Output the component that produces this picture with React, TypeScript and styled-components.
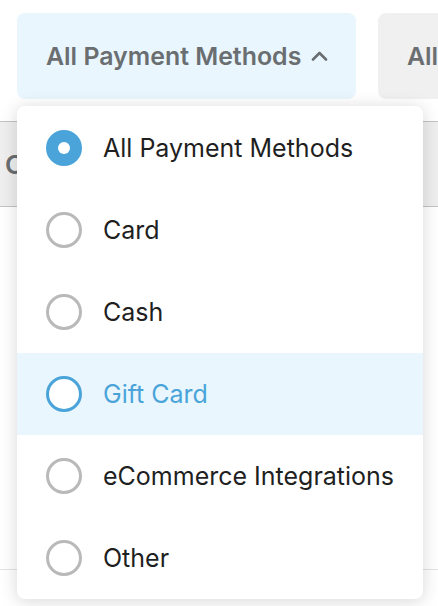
import styled, { createGlobalStyle } from "styled-components";

const GlobalStyle = createGlobalStyle`
    html, body {
        margin: 0;
        background: #ffffff;
        font-family: Inter, "Liberation Sans", sans-serif;
    }
`;

const Page = styled.div`
    position: relative;
    width: 438px;
    height: 606px;
    overflow: hidden;
    background: #ffffff;
`;

const Toolbar = styled.div`
    display: flex;
    gap: 22px;
    padding: 13px 0 22px 17px;
`;

const FilterButton = styled.button<{ active?: boolean }>`
    flex: none;
    display: flex;
    align-items: center;
    gap: 10px;
    width: ${props => (props.active ? "339px" : "200px")};
    height: 86px;
    padding: 0 0 0 29px;
    border: none;
    border-radius: 8px;
    background: ${props => (props.active ? "#e9f6fe" : "#f0f0f0")};
    color: #6a6e71;
    font-family: inherit;
    font-size: 24.9px;
    font-weight: 600;
    white-space: nowrap;
    cursor: pointer;
`;

const Table = styled.div`
    display: flex;
    flex-direction: column;
`;

const HeaderRow = styled.div`
    display: flex;
    align-items: center;
    height: 84px;
    padding-left: 5px;
    background: #efefef;
    border-top: 1px solid #c4c4c4;
    border-bottom: 1px solid #c4c4c4;
    color: #6a6e71;
    font-size: 26px;
    font-weight: 600;
`;

const BodyRow = styled.div`
    height: 362px;
    border-bottom: 1px solid #e4e4e4;
`;

const Menu = styled.ul`
    position: absolute;
    top: 106px;
    left: 17px;
    width: 406px;
    margin: 0;
    padding: 1px 0 0;
    list-style: none;
    background: #ffffff;
    border-radius: 8px;
    box-shadow: 0 2px 18px rgba(0, 0, 0, 0.16);
    overflow: hidden;
`;

const Option = styled.li<{ hovered?: boolean }>`
    display: flex;
    align-items: center;
    gap: 21px;
    height: 82px;
    padding-left: 29px;
    background: ${props => (props.hovered ? "#e9f6fe" : "transparent")};
    color: ${props => (props.hovered ? "#4aa4d9" : "#1f1f1f")};
    font-size: 25px;
    font-weight: 400;
    white-space: nowrap;
`;

const Radio = styled.span<{ checked?: boolean; hovered?: boolean }>`
    flex: none;
    box-sizing: border-box;
    width: 36px;
    height: 36px;
    border-radius: 50%;
    display: flex;
    align-items: center;
    justify-content: center;
    background: ${props => (props.checked ? "#4aa4d9" : "#ffffff")};
    border: 3px solid ${props => (props.checked || props.hovered ? "#4aa4d9" : "#b9b9b9")};

    &::after {
        content: "";
        display: ${props => (props.checked ? "block" : "none")};
        width: 12px;
        height: 12px;
        border-radius: 50%;
        background: #ffffff;
    }
`;

const Caret = () => (
    <svg width="17" height="10" viewBox="0 0 17 10" fill="none">
        <path d="M2 8.5 L8.5 2 L15 8.5" stroke="#6a6e71" strokeWidth="2.6" strokeLinecap="round" strokeLinejoin="round" />
    </svg>
);

const methods = [
    "All Payment Methods",
    "Card",
    "Cash",
    "Gift Card",
    "eCommerce Integrations",
    "Other",
];

function App() {
    const selected = "All Payment Methods";
    const hovered = "Gift Card";

    return (
        <Page>
            <GlobalStyle />
            <Toolbar>
                <FilterButton active>
                    All Payment Methods
                    <Caret />
                </FilterButton>
                <FilterButton>All</FilterButton>
            </Toolbar>
            <Table>
                <HeaderRow>Collected</HeaderRow>
                <BodyRow />
            </Table>
            <Menu>
                {methods.map(method => (
                    <Option key={method} hovered={method === hovered}>
                        <Radio checked={method === selected} hovered={method === hovered} />
                        {method}
                    </Option>
                ))}
            </Menu>
        </Page>
    );
}

export default App;
